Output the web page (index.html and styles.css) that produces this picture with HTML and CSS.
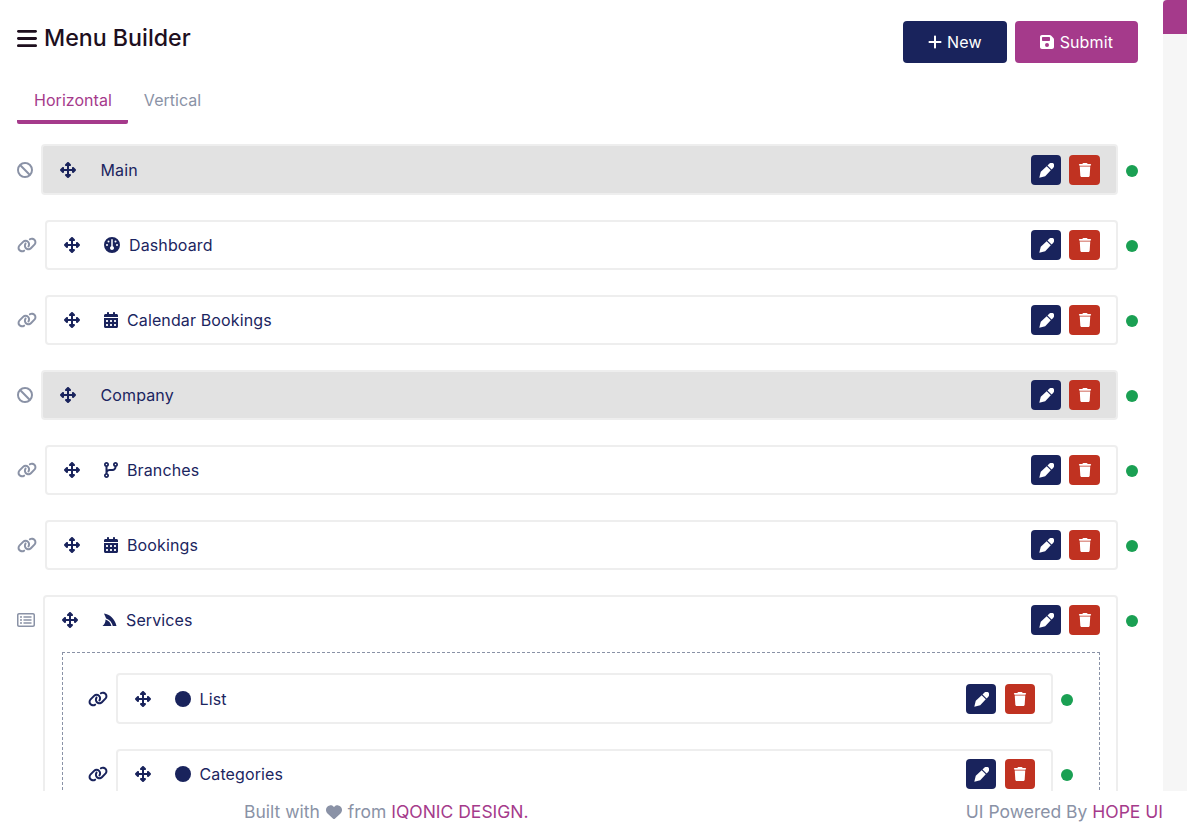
FILE: index.html
```html
<!DOCTYPE html>
<html lang="en">
<head>
<meta charset="utf-8">
<title>Menu Builder</title>
<link rel="stylesheet" href="styles.css">
</head>
<body>
<svg class="sprite" xmlns="http://www.w3.org/2000/svg">
  <symbol id="i-bars" viewBox="0 0 448 512"><path d="M0 96C0 78.3 14.3 64 32 64H416c17.7 0 32 14.3 32 32s-14.3 32-32 32H32C14.3 128 0 113.7 0 96zM0 256c0-17.7 14.3-32 32-32H416c17.7 0 32 14.3 32 32s-14.3 32-32 32H32c-17.7 0-32-14.3-32-32zM448 416c0 17.7-14.3 32-32 32H32c-17.7 0-32-14.3-32-32s14.3-32 32-32H416c17.7 0 32 14.3 32 32z"/></symbol>
  <symbol id="i-plus" viewBox="0 0 448 512"><path d="M256 80c0-17.7-14.3-32-32-32s-32 14.3-32 32V224H48c-17.7 0-32 14.3-32 32s14.3 32 32 32H192V432c0 17.7 14.3 32 32 32s32-14.3 32-32V288H400c17.7 0 32-14.3 32-32s-14.3-32-32-32H256V80z"/></symbol>
  <symbol id="i-save" viewBox="0 0 448 512"><path d="M64 32C28.7 32 0 60.7 0 96V416c0 35.3 28.7 64 64 64H384c35.3 0 64-28.7 64-64V173.3c0-17-6.7-33.3-18.7-45.3L352 50.7C340 38.7 323.7 32 306.7 32H64zm0 96c0-17.7 14.3-32 32-32H288c17.7 0 32 14.3 32 32v64c0 17.7-14.3 32-32 32H96c-17.7 0-32-14.3-32-32V128zM224 288a64 64 0 1 1 0 128 64 64 0 1 1 0-128z"/></symbol>
  <symbol id="i-move" viewBox="0 0 512 512"><path d="M278.6 9.4c-12.5-12.5-32.8-12.5-45.3 0l-64 64c-9.2 9.2-11.9 22.9-6.9 34.9s16.6 19.8 29.6 19.8h32v96H128V192c0-12.9-7.8-24.6-19.8-29.6s-25.7-2.2-34.9 6.9l-64 64c-12.5 12.5-12.5 32.8 0 45.3l64 64c9.2 9.2 22.9 11.9 34.9 6.9s19.8-16.6 19.8-29.6V288h96v96H192c-12.9 0-24.6 7.8-29.6 19.8s-2.2 25.7 6.9 34.9l64 64c12.5 12.5 32.8 12.5 45.3 0l64-64c9.2-9.2 11.9-22.9 6.9-34.9s-16.6-19.8-29.6-19.8H288V288h96v32c0 12.9 7.8 24.6 19.8 29.6s25.7 2.2 34.9-6.9l64-64c12.5-12.5 12.5-32.8 0-45.3l-64-64c-9.2-9.2-22.9-11.9-34.9-6.9s-19.8 16.6-19.8 29.6v32H288V128h32c12.9 0 24.6-7.8 29.6-19.8s2.2-25.7-6.9-34.9l-64-64z"/></symbol>
  <symbol id="i-ban" viewBox="0 0 512 512"><path d="M367.2 412.5L99.5 144.8C77.1 176.1 64 214.5 64 256c0 106 86 192 192 192c41.5 0 79.9-13.1 111.2-35.5zm45.3-45.3C434.9 335.9 448 297.5 448 256c0-106-86-192-192-192c-41.5 0-79.9 13.1-111.2 35.5L412.5 367.2zM0 256a256 256 0 1 1 512 0A256 256 0 1 1 0 256z"/></symbol>
  <symbol id="i-link" viewBox="0 0 640 512"><path d="M579.8 267.7c56.5-56.5 56.5-148 0-204.5c-50-50-128.8-56.5-186.3-15.4l-1.6 1.1c-14.4 10.3-17.7 30.3-7.4 44.6s30.3 17.7 44.6 7.4l1.6-1.1c32.1-22.9 76-19.3 103.8 8.6c31.5 31.5 31.5 82.5 0 114L422.3 334.8c-31.5 31.5-82.5 31.5-114 0c-27.9-27.9-31.5-71.8-8.6-103.8l1.1-1.6c10.3-14.4 6.9-34.4-7.4-44.6s-34.4-6.9-44.6 7.4l-1.1 1.6C206.5 251.2 213 330 263 380c56.5 56.5 148 56.5 204.5 0L579.8 267.7zM60.2 244.3c-56.5 56.5-56.5 148 0 204.5c50 50 128.8 56.5 186.3 15.4l1.6-1.1c14.4-10.3 17.7-30.3 7.4-44.6s-30.3-17.7-44.6-7.4l-1.6 1.1c-32.1 22.9-76 19.3-103.8-8.6C74 372 74 321 105.5 289.5L217.7 177.2c31.5-31.5 82.5-31.5 114 0c27.9 27.9 31.5 71.8 8.6 103.9l-1.1 1.6c-10.3 14.4-6.9 34.4 7.4 44.6s34.4 6.9 44.6-7.4l1.1-1.6C433.5 260.8 427 182 377 132c-56.5-56.5-148-56.5-204.5 0L60.2 244.3z"/></symbol>
  <symbol id="i-list" viewBox="0 0 576 512"><path d="M64 80c-8.8 0-16 7.2-16 16V416c0 8.8 7.2 16 16 16H512c8.8 0 16-7.2 16-16V96c0-8.8-7.2-16-16-16H64zM0 96C0 60.7 28.7 32 64 32H512c35.3 0 64 28.7 64 64V416c0 35.3-28.7 64-64 64H64c-35.3 0-64-28.7-64-64V96zm96 64a32 32 0 1 1 64 0 32 32 0 1 1 -64 0zm104 0c0-13.3 10.7-24 24-24H448c13.3 0 24 10.7 24 24s-10.7 24-24 24H224c-13.3 0-24-10.7-24-24zm0 96c0-13.3 10.7-24 24-24H448c13.3 0 24 10.7 24 24s-10.7 24-24 24H224c-13.3 0-24-10.7-24-24zm0 96c0-13.3 10.7-24 24-24H448c13.3 0 24 10.7 24 24s-10.7 24-24 24H224c-13.3 0-24-10.7-24-24zm-72-64a32 32 0 1 1 0-64 32 32 0 1 1 0 64zm32 64a32 32 0 1 1 -64 0 32 32 0 1 1 64 0z"/></symbol>
  <symbol id="i-gauge" viewBox="0 0 512 512"><path d="M0 256a256 256 0 1 1 512 0A256 256 0 1 1 0 256zm320 96c0-26.9-16.5-49.9-40-59.3V88c0-13.3-10.7-24-24-24s-24 10.7-24 24V292.7c-23.5 9.5-40 32.5-40 59.3c0 35.3 28.7 64 64 64s64-28.7 64-64zM144 176a32 32 0 1 0 0-64 32 32 0 1 0 0 64zm-16 80a32 32 0 1 0 -64 0 32 32 0 1 0 64 0zm288 32a32 32 0 1 0 0-64 32 32 0 1 0 0 64zM400 144a32 32 0 1 0 -64 0 32 32 0 1 0 64 0z"/></symbol>
  <symbol id="i-cal" viewBox="0 0 448 512"><path d="M128 0c17.7 0 32 14.3 32 32V64H288V32c0-17.7 14.3-32 32-32s32 14.3 32 32V64h48c26.5 0 48 21.5 48 48v48H0V112C0 85.5 21.5 64 48 64H96V32c0-17.7 14.3-32 32-32zM0 192H448V464c0 26.5-21.5 48-48 48H48c-26.5 0-48-21.5-48-48V192zm64 80v32c0 8.8 7.2 16 16 16h32c8.8 0 16-7.2 16-16V272c0-8.8-7.2-16-16-16H80c-8.8 0-16 7.2-16 16zm128 0v32c0 8.8 7.2 16 16 16h32c8.8 0 16-7.2 16-16V272c0-8.8-7.2-16-16-16H208c-8.8 0-16 7.2-16 16zm144-16c-8.8 0-16 7.2-16 16v32c0 8.8 7.2 16 16 16h32c8.8 0 16-7.2 16-16V272c0-8.8-7.2-16-16-16H336zM64 400v32c0 8.8 7.2 16 16 16h32c8.8 0 16-7.2 16-16V400c0-8.8-7.2-16-16-16H80c-8.8 0-16 7.2-16 16zm144-16c-8.8 0-16 7.2-16 16v32c0 8.8 7.2 16 16 16h32c8.8 0 16-7.2 16-16V400c0-8.8-7.2-16-16-16H208zm112 16v32c0 8.8 7.2 16 16 16h32c8.8 0 16-7.2 16-16V400c0-8.8-7.2-16-16-16H336c-8.8 0-16 7.2-16 16z"/></symbol>
  <symbol id="i-branch" viewBox="0 0 448 512"><path d="M80 104a24 24 0 1 0 0-48 24 24 0 1 0 0 48zm80-24c0 32.8-19.7 61-48 73.3v87.8c18.8-10.9 40.7-17.1 64-17.1h96c35.3 0 64-28.7 64-64v-6.7C307.7 141 288 112.8 288 80c0-44.2 35.8-80 80-80s80 35.8 80 80c0 32.8-19.7 61-48 73.3V160c0 70.7-57.3 128-128 128H176c-35.3 0-64 28.7-64 64v6.7c28.3 12.3 48 40.5 48 73.3c0 44.2-35.8 80-80 80s-80-35.8-80-80c0-32.8 19.7-61 48-73.3V353.3 153.3C19.7 141 0 112.8 0 80C0 35.8 35.8 0 80 0s80 35.8 80 80zm232 0a24 24 0 1 0 -48 0 24 24 0 1 0 48 0zM80 456a24 24 0 1 0 0-48 24 24 0 1 0 0 48z"/></symbol>
  <symbol id="i-fin" viewBox="0 0 448 512"><path d="M48 48C230 70 390 210 448 448H330C300 330 230 240 118 205C100 170 75 110 48 48zM96 240C190 270 260 340 286 448H0C60 400 100 330 96 240z"/></symbol>
  <symbol id="i-pen" viewBox="0 0 512 512"><path d="M10 502L60 300 262 110 402 250 212 452ZM290 82L350 22C400 -20 470 -10 495 20C525 55 530 110 490 162L430 222Z"/></symbol>
  <symbol id="i-trash" viewBox="0 0 448 512"><path d="M135.2 17.7L128 32H32C14.3 32 0 46.3 0 64S14.3 96 32 96H416c17.7 0 32-14.3 32-32s-14.3-32-32-32H320l-7.2-14.3C307.4 6.8 296.3 0 284.2 0H163.8c-12.1 0-23.2 6.8-28.6 17.7zM416 128H32L53.2 467c1.6 25.3 22.6 45 47.9 45H346.9c25.3 0 46.3-19.7 47.9-45L416 128z"/></symbol>
  <symbol id="i-heart" viewBox="0 0 512 512"><path d="M47.6 300.4L228.3 469.1c7.5 7 17.4 10.9 27.7 10.9s20.2-3.9 27.7-10.9L464.4 300.4c30.4-28.3 47.6-68 47.6-109.5v-5.8c0-69.9-50.5-129.5-119.4-141C347 36.5 300.6 51.4 268 84L256 96 244 84c-32.6-32.6-79-47.5-124.6-39.9C50.5 55.6 0 115.2 0 185.1v5.8c0 41.5 17.2 81.2 47.6 109.5z"/></symbol>
</svg>

<div class="app">
  <div class="content">
    <main class="panel">
      <header class="top">
        <h1 class="title"><svg class="ic ic-bars"><use href="#i-bars"/></svg>Menu Builder</h1>
        <div class="actions">
          <button class="btn btn-navy"><svg class="ic ic-14"><use href="#i-plus"/></svg>New</button>
          <button class="btn btn-purple"><svg class="ic ic-14"><use href="#i-save"/></svg>Submit</button>
        </div>
      </header>

      <nav class="tabs">
        <a class="tab tab-active">Horizontal</a>
        <a class="tab">Vertical</a>
      </nav>

      <section class="rows">
        <div class="row row-first">
          <svg class="ic handle w16"><use href="#i-ban"/></svg>
          <div class="box box-group">
            <div class="head">
              <svg class="ic move"><use href="#i-move"/></svg>
              <span class="label">Main</span>
              <span class="tools"><button class="tool tool-edit"><svg class="ic"><use href="#i-pen"/></svg></button><button class="tool tool-del"><svg class="ic"><use href="#i-trash"/></svg></button></span>
            </div>
          </div>
          <span class="dot"></span>
        </div>

        <div class="row">
          <svg class="ic handle w20"><use href="#i-link"/></svg>
          <div class="box">
            <div class="head">
              <svg class="ic move"><use href="#i-move"/></svg>
              <span class="label"><svg class="ic w16"><use href="#i-gauge"/></svg>Dashboard</span>
              <span class="tools"><button class="tool tool-edit"><svg class="ic"><use href="#i-pen"/></svg></button><button class="tool tool-del"><svg class="ic"><use href="#i-trash"/></svg></button></span>
            </div>
          </div>
          <span class="dot"></span>
        </div>

        <div class="row">
          <svg class="ic handle w20"><use href="#i-link"/></svg>
          <div class="box">
            <div class="head">
              <svg class="ic move"><use href="#i-move"/></svg>
              <span class="label"><svg class="ic w14"><use href="#i-cal"/></svg>Calendar Bookings</span>
              <span class="tools"><button class="tool tool-edit"><svg class="ic"><use href="#i-pen"/></svg></button><button class="tool tool-del"><svg class="ic"><use href="#i-trash"/></svg></button></span>
            </div>
          </div>
          <span class="dot"></span>
        </div>

        <div class="row">
          <svg class="ic handle w16"><use href="#i-ban"/></svg>
          <div class="box box-group">
            <div class="head">
              <svg class="ic move"><use href="#i-move"/></svg>
              <span class="label">Company</span>
              <span class="tools"><button class="tool tool-edit"><svg class="ic"><use href="#i-pen"/></svg></button><button class="tool tool-del"><svg class="ic"><use href="#i-trash"/></svg></button></span>
            </div>
          </div>
          <span class="dot"></span>
        </div>

        <div class="row">
          <svg class="ic handle w20"><use href="#i-link"/></svg>
          <div class="box">
            <div class="head">
              <svg class="ic move"><use href="#i-move"/></svg>
              <span class="label"><svg class="ic w14"><use href="#i-branch"/></svg>Branches</span>
              <span class="tools"><button class="tool tool-edit"><svg class="ic"><use href="#i-pen"/></svg></button><button class="tool tool-del"><svg class="ic"><use href="#i-trash"/></svg></button></span>
            </div>
          </div>
          <span class="dot"></span>
        </div>

        <div class="row">
          <svg class="ic handle w20"><use href="#i-link"/></svg>
          <div class="box">
            <div class="head">
              <svg class="ic move"><use href="#i-move"/></svg>
              <span class="label"><svg class="ic w14"><use href="#i-cal"/></svg>Bookings</span>
              <span class="tools"><button class="tool tool-edit"><svg class="ic"><use href="#i-pen"/></svg></button><button class="tool tool-del"><svg class="ic"><use href="#i-trash"/></svg></button></span>
            </div>
          </div>
          <span class="dot"></span>
        </div>

        <div class="row">
          <svg class="ic handle w18"><use href="#i-list"/></svg>
          <div class="box">
            <div class="head">
              <svg class="ic move"><use href="#i-move"/></svg>
              <span class="label"><svg class="ic w15"><use href="#i-fin"/></svg>Services</span>
              <span class="tools"><button class="tool tool-edit"><svg class="ic"><use href="#i-pen"/></svg></button><button class="tool tool-del"><svg class="ic"><use href="#i-trash"/></svg></button></span>
            </div>
            <div class="nest">
              <div class="row row-first">
                <svg class="ic handle handle-dark w20"><use href="#i-link"/></svg>
                <div class="box">
                  <div class="head">
                    <svg class="ic move"><use href="#i-move"/></svg>
                    <span class="label"><span class="bullet"></span>List</span>
                    <span class="tools"><button class="tool tool-edit"><svg class="ic"><use href="#i-pen"/></svg></button><button class="tool tool-del"><svg class="ic"><use href="#i-trash"/></svg></button></span>
                  </div>
                </div>
                <span class="dot"></span>
              </div>
              <div class="row">
                <svg class="ic handle handle-dark w20"><use href="#i-link"/></svg>
                <div class="box">
                  <div class="head">
                    <svg class="ic move"><use href="#i-move"/></svg>
                    <span class="label"><span class="bullet"></span>Categories</span>
                    <span class="tools"><button class="tool tool-edit"><svg class="ic"><use href="#i-pen"/></svg></button><button class="tool tool-del"><svg class="ic"><use href="#i-trash"/></svg></button></span>
                  </div>
                </div>
                <span class="dot"></span>
              </div>
            </div>
          </div>
          <span class="dot"></span>
        </div>
      </section>
    </main>
    <aside class="rail"><div class="rail-tab"></div></aside>
  </div>
  <footer class="foot">
    <span class="foot-text">Built with <svg class="ic heart"><use href="#i-heart"/></svg> from <a class="accent">IQONIC DESIGN.</a></span>
    <span class="foot-text">UI Powered By <a class="accent">HOPE UI</a></span>
  </footer>
</div>
</body>
</html>
```

FILE: styles.css
```css
* { box-sizing: border-box; }

html, body {
  margin: 0;
  height: 100%;
  overflow: hidden;
}

body {
  background: #fff;
  color: #1b2459;
  font-family: Inter, "Noto Sans", sans-serif;
  font-size: 16px;
  line-height: 24px;
  letter-spacing: .12px;
}

.sprite { display: none; }

.ic {
  display: block;
  flex: none;
  width: 16px;
  height: 16px;
  fill: currentColor;
}
.w14 { width: 14px; }
.w15 { width: 15px; }
.w16 { width: 16px; }
.w18 { width: 18px; }
.w20 { width: 20px; }

.app {
  display: flex;
  flex-direction: column;
  height: 825px;
}

.content {
  display: flex;
  flex: 1;
  min-height: 0;
}

.panel {
  width: 1163px;
  flex: none;
  padding: 21px 25px 0 17px;
  overflow: hidden;
  background: #fff;
}

.rail {
  flex: 1;
  background: #f6f6f6;
}

.rail-tab {
  height: 34px;
  background: #a53a8b;
  border-top-left-radius: 4px;
}

/* header */
.top {
  display: flex;
  justify-content: space-between;
  align-items: flex-start;
}

.title {
  display: flex;
  align-items: center;
  gap: 7px;
  margin: 0;
  font-size: 23.2px;
  line-height: 34px;
  font-weight: 500;
  letter-spacing: 0;
  color: #1e0f1e;
}

.ic-bars {
  width: 20px;
  height: 23px;
}

.actions {
  display: flex;
  gap: 8px;
}

.btn {
  display: flex;
  align-items: center;
  gap: 6px;
  height: 42px;
  padding: 0 25px;
  border: 0;
  border-radius: 4px;
  color: #fff;
  font: inherit;
  letter-spacing: inherit;
}
.btn-navy {
  gap: 5px;
  background: #19235c;
}
.btn-purple { background: #a53a8b; }
.ic-14 { width: 14px; height: 16px; }

/* tabs */
.tabs {
  display: flex;
  margin-top: 25px;
}

.tab {
  padding: 0 16px 8px;
  border-bottom: 4px solid transparent;
  border-radius: 0 0 2px 2px;
  color: #8a92a6;
  letter-spacing: .04px;
}
.tab-active {
  padding-left: 17px;
  color: #a53a8b;
  border-bottom-color: #a53a8b;
}

/* rows */
.rows { margin-top: 20px; }

.row {
  display: flex;
  align-items: flex-start;
  gap: 8px;
  margin-bottom: 25px;
}

.handle {
  margin-top: 17px;
  color: #8a92a6;
}
.handle-dark { color: #19235c; }
.row-first > .handle { margin-top: 18px; }

.box {
  flex: 1;
  min-width: 0;
  padding: 8px 16px 8px 17px;
  border: 2px solid #eee;
  border-radius: 4px;
  background: #fff;
}
.row-first > .box { padding-top: 9px; }
.box-group { background: #e2e2e2; }

.head {
  display: flex;
  align-items: center;
  height: 30px;
}

.move {
  color: #19235c;
  margin-right: 24px;
}

.label {
  display: flex;
  align-items: center;
  gap: 9px;
  flex: 1;
  color: #1b2560;
}
.box-group .label { padding-left: .5px; }
.label .ic { color: #19235c; }

.bullet {
  width: 16px;
  height: 16px;
  margin-right: -.5px;
  border-radius: 50%;
  background: #19235c;
}

.tools {
  display: flex;
  gap: 8px;
}

.tool {
  display: flex;
  align-items: center;
  justify-content: center;
  width: 30px;
  height: 30px;
  padding: 0;
  border: 0;
  border-radius: 4px;
  color: #fff;
}
.tool .ic { width: 15px; height: 15px; }
.tool-del .ic { width: 14px; height: 14px; }
.tool-edit { background: #19235c; }
.tool-del {
  width: 31px;
  background: #c03221;
}
.nest .tool-del {
  width: 30px;
  margin-left: 1px;
}

.dot {
  flex: none;
  width: 12px;
  height: 12px;
  margin-top: 20px;
  border-radius: 50%;
  background: #1aa053;
}
.row-first > .dot { margin-top: 21px; }

/* nested list */
.nest {
  margin-top: 17px;
  padding: 20px 26px 0 25px;
  border: 1px dashed #8a92a6;
}

/* footer */
.foot {
  display: flex;
  justify-content: space-between;
  align-items: center;
  height: 34px;
  padding: 8px 24px 0 244px;
  background: #fff;
  color: #8a92a6;
}

.foot-text {
  font-size: 17.5px;
  letter-spacing: 0;
}

.heart {
  display: inline-block;
  vertical-align: -2px;
  margin: 0 1px;
}

.accent { color: #a53a8b; }
```
